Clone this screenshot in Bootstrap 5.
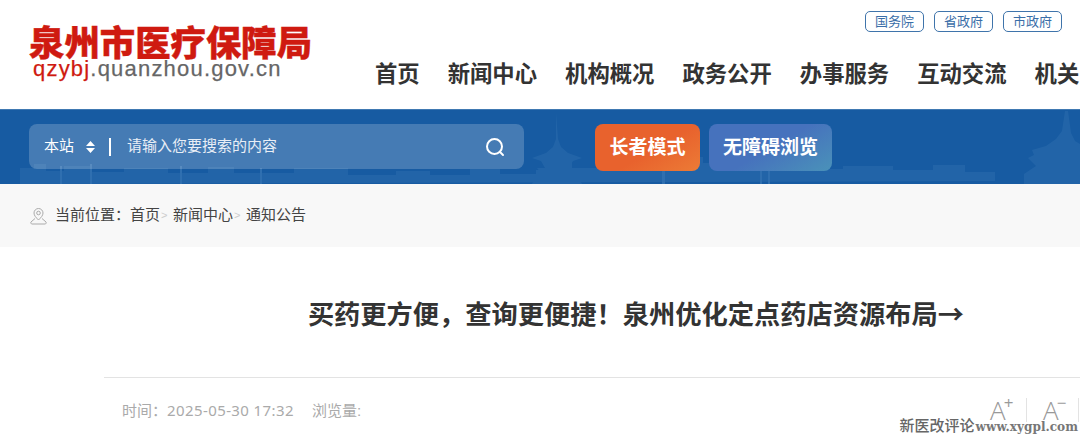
<!DOCTYPE html>
<html lang="zh-CN">
<head>
<meta charset="utf-8">
<title>买药更方便，查询更便捷</title>
<link href="https://cdn.jsdelivr.net/npm/bootstrap@5.3.0/dist/css/bootstrap.min.css" rel="stylesheet">
<style>
html,body{height:434px;overflow:hidden;background:#fff}
body{font-family:"Liberation Sans","Noto Sans CJK SC",sans-serif;position:relative}
.site-top{height:109px;width:1080px;overflow:hidden}
.brand-col{padding:22px 0 0 29px;width:375px;flex:none}
.brand-name{font-family:"Noto Sans CJK SC",serif;font-weight:900;font-size:35.4px;line-height:38px;color:#cf1a10;white-space:nowrap;-webkit-text-stroke:.4px #cf1a10}
.brand-url{font-family:"Liberation Sans",sans-serif;font-size:22px;line-height:18px;color:#666;letter-spacing:1.2px;padding-left:4px;-webkit-text-stroke:.25px currentColor}
.brand-url b{font-weight:400;color:#cf1a10}
.top-right{flex:1;min-width:0}
.gov-links{padding:11px 18px 0 0;gap:10px}
.gov-pill{display:block;width:59px;height:21px;border:1px solid #3f74ab;border-radius:5px;color:#3a6ea8;font-size:13px;line-height:19px;text-align:center;text-decoration:none}
.main-nav{gap:28px;margin:28px 0 0;white-space:nowrap}
.main-nav a{font-size:22.35px;line-height:30px;font-weight:700;color:#333;text-decoration:none;flex:none}
.blue-band{height:75px;background:#175ba2;border-top:1px solid #4079b2;position:relative;overflow:hidden;padding:14px 0 0 29px;gap:71px}
.skyline{position:absolute;left:0;top:0;width:1080px;height:75px;opacity:.2}
.search-bar{position:relative;width:495px;height:45px;background:rgba(255,255,255,.2);border-radius:8px;color:#fff;padding:0 19px 0 15px;font-size:15px}
.pick-arrows{margin-left:12px;width:9px}
.sep{width:2px;height:18px;background:#fff;margin:0 16px 0 14px}
.hint{flex:1;color:#e8eef6}
.btn-elder,.btn-access{position:relative;height:47px;border-radius:8px;color:#fff;font-weight:700;font-size:19px;line-height:47px;text-align:center;border:0;padding:0}
.btn-elder{width:105px;background:linear-gradient(150deg,#e8622d 55%,#ec7b36)}
.btn-access{width:123px;background:linear-gradient(150deg,#4672bd 50%,#4a92b9)}
.tool-btns{gap:9px}
.crumb-bar{height:63px;background:#f8f8f8;padding-left:30px;font-size:15px;color:#444}
.crumb-bar .pin{margin-right:8px}
.crumb-bar i{font-style:normal;color:#ccc;font-size:11px;width:13px;text-align:left;padding-left:1px}
.article-wrap{margin-left:104px;width:1064px}
.art-title{font-family:"Noto Sans CJK SC","Liberation Sans",sans-serif;font-size:26.25px;line-height:36px;font-weight:700;color:#333;text-align:center;margin:0;padding:48px 0 46px}
.art-meta{border-top:1px solid #e3e3e3;height:60px;padding-left:18px;color:#aaa;font-size:15px;padding-top:22px;line-height:20px;position:relative}
.meta-date{font-family:"Noto Sans",sans-serif;letter-spacing:.4px}
.meta-views{margin-left:18px}
.size-tools{position:absolute;left:886px;top:20px}
.size-a{height:24px;border-right:1px solid #e3e3e3;color:#999;font-family:"Open Sans",sans-serif;font-weight:300;font-size:26px;line-height:24px}
.size-a.first{width:37px}
.size-a.second{width:52px;padding-left:16px}
.size-a sup{font-size:17px;font-weight:400;top:-.62em;line-height:0;position:relative;vertical-align:baseline;margin-left:-2px}
.stamp{position:absolute;right:2px;bottom:-2px;color:#666;font-size:15px;line-height:18px;white-space:nowrap;font-family:"Noto Sans CJK SC",serif;font-weight:500}
.stamp b{font-family:"DejaVu Serif",serif;font-size:12.1px;font-weight:700;color:#777;margin-left:1px}
</style>
</head>
<body>
<header class="site-top d-flex">
  <div class="brand-col">
    <div class="brand-name">泉州市医疗保障局</div>
    <div class="brand-url"><b>qzybj</b>.quanzhou.gov.cn</div>
  </div>
  <div class="top-right">
    <div class="gov-links d-flex justify-content-end">
      <a class="gov-pill" href="#">国务院</a>
      <a class="gov-pill" href="#">省政府</a>
      <a class="gov-pill" href="#">市政府</a>
    </div>
    <nav class="main-nav d-flex">
      <a href="#">首页</a><a href="#">新闻中心</a><a href="#">机构概况</a><a href="#">政务公开</a><a href="#">办事服务</a><a href="#">互动交流</a><a href="#">机关</a>
    </nav>
  </div>
</header>
<section class="blue-band d-flex">
  <svg class="skyline" viewBox="0 0 1080 75" fill="#4f8cc4" aria-hidden="true">
    <path d="M20 74V58h14v-4h12v7h18v-5h26v6h34v-4h44v5h40v-6h26v6h60v-5h54v7h48v-4h34v4h40v-6h30v5h36v-4h16v-8h20v6h24v-5h14v6h22l5-4 6 3h30v-6h14v-5h16v6h10l6 5h30v-4h44v5h50v-3h50v4h40v-5h32v7h30v9z"/>
    <path d="M556 3l2 26 3 8 7 6 14 5-9 3-4 7h8l-4 5 10 12v6h-52v-6l10-12-4-5h8l-4-7-9-3 14-5 7-6 3-8z"/>
    <path d="M1068 1l3 22 4 8 5 3v12h2v28h-58v-10l12-8-8-8 6-3-2-5 14-4 10-7 6-8 3-20z"/>
    <g fill="#8fc0ea"><rect x="60" y="56" width="2" height="18"/><rect x="90" y="54" width="2" height="20"/><rect x="180" y="56" width="2" height="18"/><rect x="260" y="58" width="2" height="16"/><rect x="760" y="52" width="2" height="22"/><rect x="768" y="52" width="2" height="22"/><rect x="662" y="58" width="3" height="16"/></g>
  </svg>
  <div class="search-bar d-flex align-items-center">
    <span>本站</span>
    <svg class="pick-arrows" viewBox="0 0 9 12" height="12" fill="#fff" aria-hidden="true"><path d="M4.500 0 9 5H0zM0 7h9l-4.500 5z"/></svg>
    <span class="sep"></span>
    <span class="hint">请输入您要搜索的内容</span>
    <svg width="20" height="20" viewBox="0 0 20 20" fill="none" stroke="#fff" stroke-width="2" stroke-linecap="round" aria-hidden="true"><circle cx="9.500" cy="9.500" r="7.500"/><path d="m15 15 3 3"/></svg>
  </div>
  <div class="tool-btns d-flex">
    <button type="button" class="btn-elder">长者模式</button>
    <button type="button" class="btn-access">无障碍浏览</button>
  </div>
</section>
<section class="crumb-bar d-flex align-items-center">
  <svg class="pin" width="17" height="18" viewBox="0 0 17 18" fill="none" stroke="#aaa" stroke-width="1" aria-hidden="true"><path d="M8.500 13C6 10.500 4 8.500 4 6a4.500 4.500 0 0 1 9 0c0 2.500-2 4.500-4.500 7z"/><circle cx="8.500" cy="6" r="1.800"/><path d="M5 11.500 1 15c-.6.800 0 2 1 2h13c1 0 1.600-1.200 1-2l-4-3.500"/></svg>
  <span>当前位置：</span><span>首页</span><i>&gt;</i><span>新闻中心</span><i>&gt;</i><span>通知公告</span>
</section>
<main class="article-wrap">
  <h1 class="art-title">买药更方便，查询更便捷！泉州优化定点药店资源布局→</h1>
  <div class="art-meta">
    <span>时间：</span><span class="meta-date">2025-05-30 17:32</span><span class="meta-views">浏览量:</span>
    <div class="size-tools d-flex">
      <span class="size-a first">A<sup>+</sup></span>
      <span class="size-a second">A<sup>−</sup></span>
    </div>
  </div>
</main>
<div class="stamp">新医改评论<b>www.xygpl.com</b></div>
<script src="https://cdn.jsdelivr.net/npm/bootstrap@5.3.0/dist/js/bootstrap.bundle.min.js"></script>
</body>
</html>
